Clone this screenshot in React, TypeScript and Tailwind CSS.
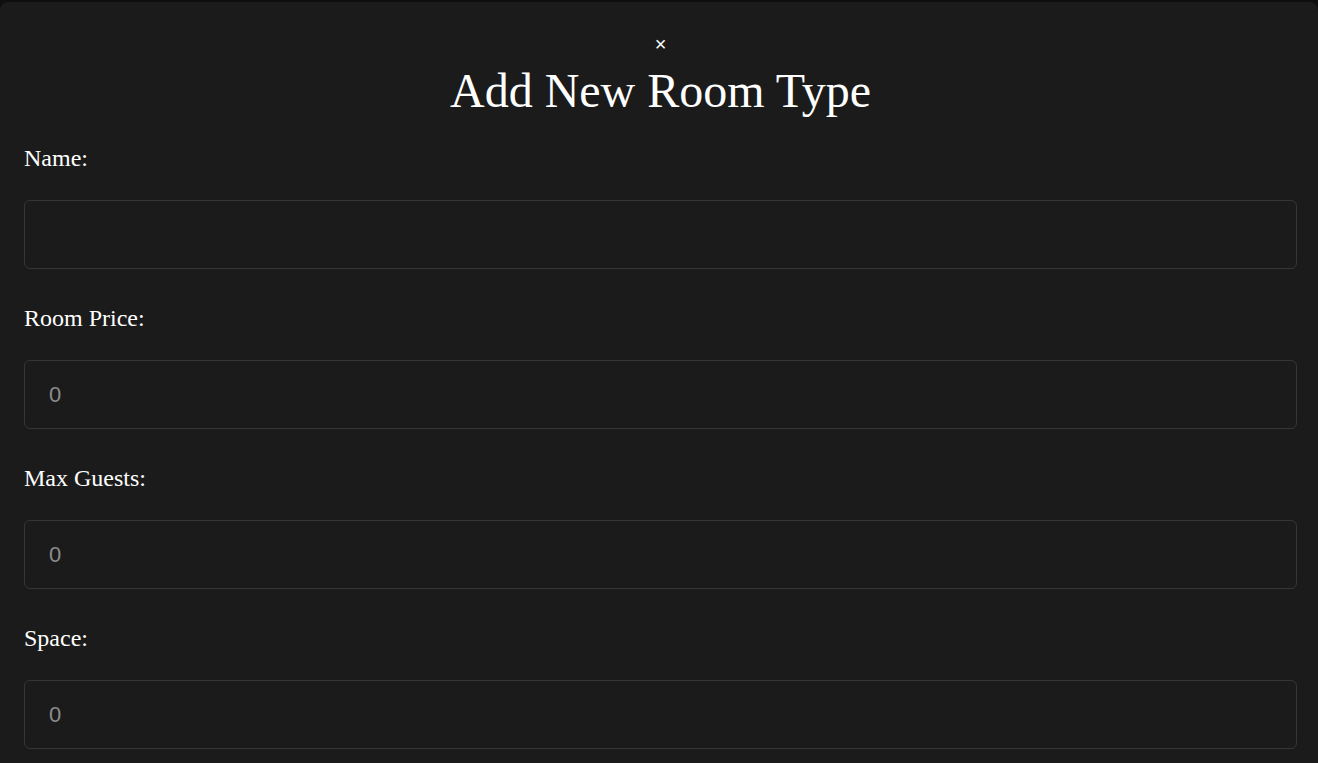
import React from "react";

const fields = [
  { label: "Name:", placeholder: "" },
  { label: "Room Price:", placeholder: "0" },
  { label: "Max Guests:", placeholder: "0" },
  { label: "Space:", placeholder: "0" },
];

const App = () => {
  return (
    <div className="h-[763px] overflow-hidden bg-[#0e0e0e] pt-[2px]">
      <div className="min-h-full rounded-t-lg bg-[#1b1b1b] pl-6 pr-[21px] pt-[28px] font-['Liberation_Serif',serif] text-white">
        <div className="flex justify-center">
          <button className="text-[20px] leading-[28px] font-['Liberation_Sans',sans-serif]">
            ×
          </button>
        </div>
        <h2 className="mt-[4px] text-center text-[48px] leading-[58px]">
          Add New Room Type
        </h2>

        <form className="mt-[20px]">
          {fields.map((f) => (
            <div key={f.label} className="pb-[31px]">
              <label className="block text-[24px] leading-[36px]">{f.label}</label>
              <input
                type="text"
                placeholder={f.placeholder}
                className="mt-[24px] h-[69px] w-full rounded-md border border-[#363636] bg-[#1b1b1b] px-6 font-['Liberation_Sans',sans-serif] text-[22px] text-white placeholder:text-[#8c8c8c] focus:outline-none"
              />
            </div>
          ))}
        </form>
      </div>
    </div>
  );
};

export default App;
